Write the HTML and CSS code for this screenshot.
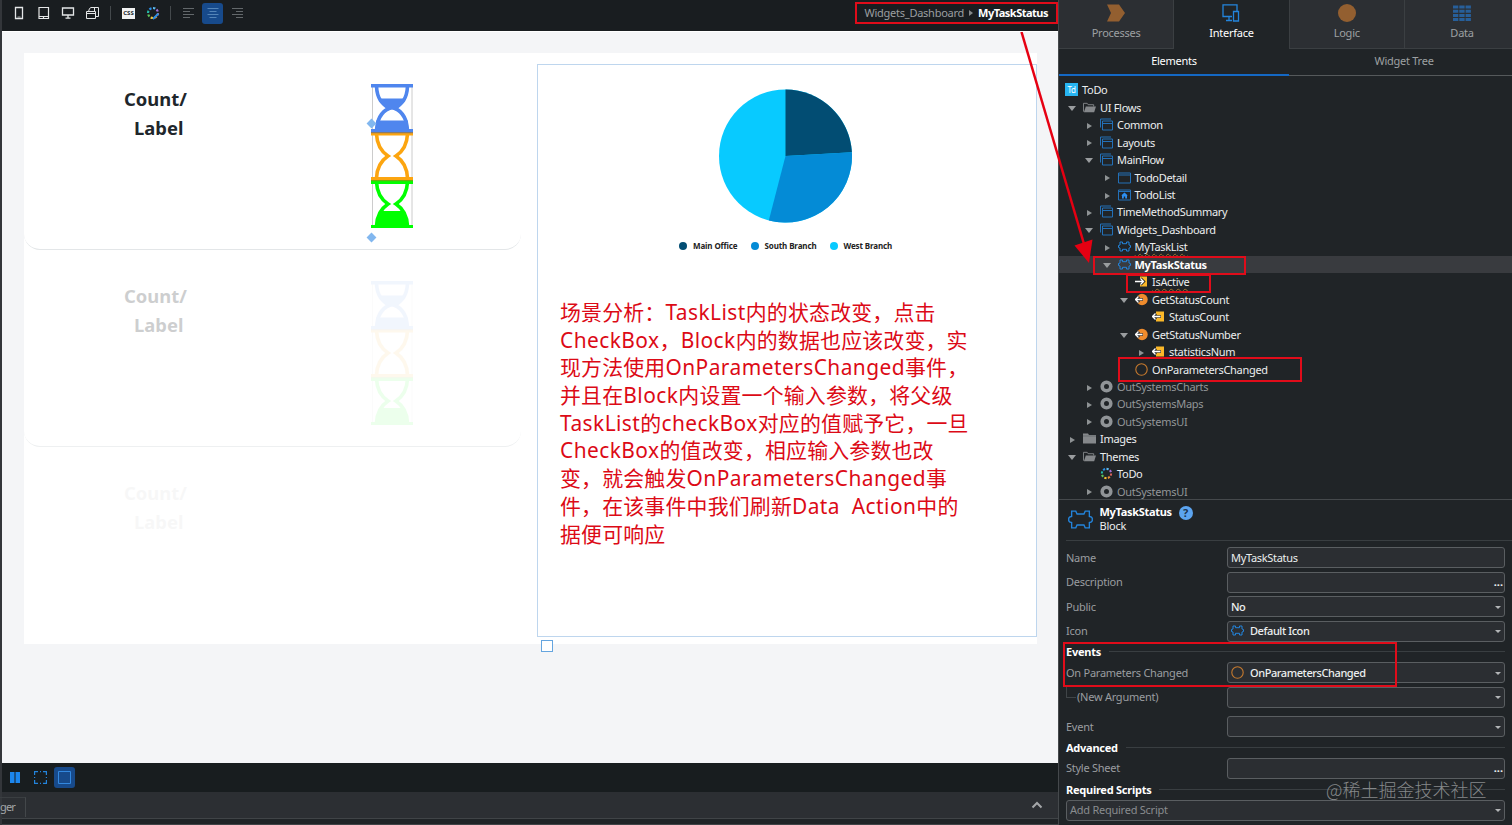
FILE: index.html
```
<!DOCTYPE html>
<html lang="en">
<head>
  <meta charset="UTF-8" />
  <meta name="viewport" content="width=device-width, initial-scale=1.0"/>
  <title>MyTaskStatus</title>
  <link rel="stylesheet" href="styles.css">
</head>
<body>
  <!-- Shared icons -->
  <svg class="defs" width="0" height="0">
    <symbol id="flow" viewBox="0 0 13 12"><path d="M2.5 2.5h10v9h-10zM2.5 5h10M.5 9V.5H11" fill="none" stroke="#2370b8"/></symbol>
    <symbol id="screen" viewBox="0 0 13 12"><path d="M.5 1.5h12v10H.5zM.5 3.5h12" fill="none" stroke="#2370b8"/></symbol>
    <symbol id="home" viewBox="0 0 13 12"><path d="M.5 1.5h12v10H.5zM.5 3h12" fill="none" stroke="#2370b8"/><path d="M6.5 4l3.3 3H9v3H7.2V8H5.8v2H4V7h-.8z" fill="#2d8ff0"/></symbol>
    <symbol id="block" viewBox="0 0 24 18"><path d="M3.500 1H7.500L8.700 3.700H15.300L16.500 1H20.500V6L22.500 6.600 23.300 7.800V10.200L22.500 11.400 20.500 12V17H16.500L15.300 14.300H8.700L7.500 17H3.500V12L1.500 11.400.7 10.200V7.800L1.500 6.600 3.500 6z" fill="none" stroke="#2384dc" stroke-width="1.300"/></symbol>
    <symbol id="block-small" viewBox="0 0 13 13"><path d="M2 2H4.500V3.700H8.500V2H11V5L12.500 5.500V7.500L11 8V11H8.500V9.300H4.500V11H2V8L.5 7.500V5.500L2 5z" fill="none" stroke="#2384dc" stroke-width="1"/></symbol>
    <symbol id="input" viewBox="0 0 13 12"><path d="M5 1h7v10H5z" fill="#fbb829"/><path d="M0 6h8M5.500 3l3 3-3 3" fill="none" stroke="#202427" stroke-width="3"/><path d="M0 6h8M5.500 3l3 3-3 3" fill="none" stroke="#fff" stroke-width="1.300"/></symbol>
    <symbol id="output" viewBox="0 0 13 12"><path d="M4 1h8v10H4z" fill="#fbb829"/><path d="M1 6h8M4 3L1 6l3 3" fill="none" stroke="#202427" stroke-width="2.600"/><path d="M.500 6h8M3.500 3L.5 6l3 3" fill="none" stroke="#fff" stroke-width="1.300"/></symbol>
    <symbol id="action" viewBox="0 0 13 12"><circle cx="7" cy="6" r="5.700" fill="#ee8b2d"/><path d="M0 6h8M4 3L1 6l3 3" fill="none" stroke="#202427" stroke-width="2.600"/><path d="M.500 6h7M3.500 3L.5 6l3 3" fill="none" stroke="#fff" stroke-width="1.300"/></symbol>
    <symbol id="event" viewBox="0 0 13 13"><circle cx="6.500" cy="6.500" r="5.700" fill="none" stroke="#c67a2e" stroke-width="1.100"/></symbol>
    <symbol id="module" viewBox="0 0 13 13"><circle cx="6.500" cy="6.500" r="4.300" fill="none" stroke="#909497" stroke-width="3.600"/></symbol>
    <symbol id="folder" viewBox="0 0 13 12"><path d="M0 1h5l1 1.500h7V11H0z" fill="#85888b"/><path d="M0 3.500h13" stroke="#5d6164" stroke-width=".7"/></symbol>
    <symbol id="folder-open" viewBox="0 0 14 12"><path d="M.5 10.500V1.500h4l1 1.500h6v2" fill="none" stroke="#85888b"/><path d="M3 5h11l-2 6H1z" fill="#85888b"/></symbol>
    <symbol id="wheel" viewBox="0 0 14 14"><g fill="none" stroke-width="2.200" stroke-dasharray="2.400 40">
      <circle cx="7" cy="7" r="5" stroke="#d9635c"/>
      <circle cx="7" cy="7" r="5" stroke="#e98c35" transform="rotate(45 7 7)"/>
      <circle cx="7" cy="7" r="5" stroke="#f1c232" transform="rotate(90 7 7)"/>
      <circle cx="7" cy="7" r="5" stroke="#5dc45a" transform="rotate(135 7 7)"/>
      <circle cx="7" cy="7" r="5" stroke="#25b9aa" transform="rotate(180 7 7)"/>
      <circle cx="7" cy="7" r="5" stroke="#2b8fe6" transform="rotate(225 7 7)"/>
      <circle cx="7" cy="7" r="5" stroke="#5cb8f0" transform="rotate(270 7 7)"/>
      <circle cx="7" cy="7" r="5" stroke="#a572d8" transform="rotate(315 7 7)"/></g></symbol>
    <symbol id="brush" viewBox="0 0 14 14"><use href="#wheel" width="14" height="14"/><path d="M7 13L12.500 7.500" stroke="#2b8fe6" stroke-width="2"/></symbol>
    <symbol id="glasses" viewBox="0 0 42 144">
      <path d="M1.500 2v140M41 2v140" stroke="#ccc" stroke-width="1"/>
      <g fill="none" stroke="#4f86ee" stroke-width="3.600">
        <path d="M5.500 2C6 16 12 20 18 24.500 10 28 6 36 5.500 47M36.500 2C36 16 30 20 24 24.500 32 28 36 36 36.500 47"/>
      </g>
      <path d="M0 0h42v3.500H0zM0 45h42v3.500H0zM7 14.500h28c-2 5-7 8-11 11h-6c-4-3-9-6-11-11zM5 36.500h32V46H5z" fill="#4f86ee"/>
      <g fill="none" stroke="#fca510" stroke-width="3.600">
        <path d="M5.500 50C6 62 11 68 17 72 11 76 6 83 5.500 94M36.500 50C36 62 31 68 25 72 31 76 36 83 36.500 94"/>
      </g>
      <path d="M0 48.500h42v3H0zM0 93h42v3H0z" fill="#fca510"/>
      <path d="M0 48h42v1.200H0z" fill="#8b7b68"/>
      <g fill="none" stroke="#0f0" stroke-width="3.600">
        <path d="M5.500 98C6 110 11 116 17 120 11 124 6 131 5.500 142M36.500 98C36 110 31 116 25 120 31 124 36 131 36.500 142"/>
      </g>
      <path d="M0 96.500h42v3.500H0zM0 141h42v3H0zM9 127h24c3 5 4 10 4 15H5c0-5 1-10 4-15z" fill="#0f0"/>
      <path d="M0 96h42v1.200H0z" fill="#6aaf10"/>
    </symbol>
  </svg>

  <div class="app">
    <main class="editor">
      <div class="toolbar">
        <svg class="tool t1" width="14" height="14" viewBox="0 0 14 14"><path d="M3.500 1.500h7v11h-7z" fill="none" stroke="#e4e6e7" stroke-width="1.300"/><path d="M5.500 11h3" stroke="#e4e6e7" stroke-width=".7"/></svg>
        <svg class="tool t2" width="14" height="14" viewBox="0 0 14 14"><path d="M2 1.500h9.500v11H2zM2 10.500h9.500M6.500 10.500v2" fill="none" stroke="#e4e6e7" stroke-width="1.200"/></svg>
        <svg class="tool t3" width="14" height="14" viewBox="0 0 14 14"><path d="M1.500 2h11v7h-11zM7 9v3M4.500 12.200h5" fill="none" stroke="#e4e6e7" stroke-width="1.300"/></svg>
        <svg class="tool t4" width="14" height="14" viewBox="0 0 14 14"><path d="M.5 5.500h9v7h-9zM.5 7.500h9M2.500 5.500l1-3 1.500-1H12.500v9h-3M8.500 1.500v4" fill="none" stroke="#e4e6e7"/></svg>
        <i class="sep s1"></i>
        <span class="css">CSS</span>
        <svg class="tool t5" width="14" height="14"><use href="#brush"/></svg>
        <i class="sep s2"></i>
        <svg class="tool t6" width="12" height="12" viewBox="0 0 12 12"><path d="M0 1.500h11M0 4.500h7M0 7.500h11M0 10.500h7" stroke="#63686b"/></svg>
        <span class="selected"><svg width="12" height="12" viewBox="0 0 12 12"><path d="M.5 1.500h11M2.500 4.500h7M.5 7.500h11M2.500 10.500h7" stroke="#5485b8"/></svg></span>
        <svg class="tool t7" width="12" height="12" viewBox="0 0 12 12"><path d="M0 1.500h11M4 4.500h7M0 7.500h11M4 10.500h7" stroke="#63686b"/></svg>
        <div class="crumbs"><span>Widgets_Dashboard</span><i class="tri"></i><b>MyTaskStatus</b></div>
      </div>

      <div class="canvas">
        <div class="page">
          <div class="list">
            <div class="card">
              <div class="count">Count/<br><span>Label</span></div>
              <div class="icons">
                <svg width="42" height="144"><use href="#glasses"/></svg>
                <i class="handle h1"></i><i class="handle h2"></i>
              </div>
            </div>
            <div class="card faded">
              <div class="count">Count/<br><span>Label</span></div>
              <div class="icons"><svg width="42" height="144"><use href="#glasses"/></svg></div>
            </div>
            <div class="card ghost">
              <div class="count">Count/<br><span>Label</span></div>
            </div>
          </div>
          <div class="chart-box">
            <svg class="pie" width="134" height="134" viewBox="0 0 134 134">
              <circle cx="66.500" cy="67" r="66.500" fill="#08caff"/>
              <path d="M66.500 67V.5A66.500 66.500 0 0 1 132.900 63.200z" fill="#024d73"/>
              <path d="M66.500 67L132.900 63.200A66.500 66.500 0 0 1 49.800 131.400z" fill="#048bd6"/>
            </svg>
            <div class="legend">
              <span><i class="dot main"></i>Main Office</span>
              <span><i class="dot south"></i>South Branch</span>
              <span><i class="dot west"></i>West Branch</span>
            </div>
            <div class="note">
              <p>场景分析：<span>TaskList</span>内的状态改变，点击</p>
              <p><span>CheckBox</span>，<span>Block</span>内的数据也应该改变，实</p>
              <p>现方法使用<span>OnParametersChanged</span>事件，</p>
              <p>并且在<span>Block</span>内设置一个输入参数，将父级</p>
              <p><span>TaskList</span>的<span>checkBox</span>对应的值赋予它，一旦</p>
              <p><span>CheckBox</span>的值改变，相应输入参数也改</p>
              <p>变，就会触发<span>OnParametersChanged</span>事</p>
              <p>件，在该事件中我们刷新<span>Data&nbsp; Action</span>中的</p>
              <p>据便可响应</p>
            </div>
            <i class="drop"></i>
          </div>
        </div>
      </div>

      <div class="statusbar">
        <svg width="10" height="11" viewBox="0 0 10 11"><path d="M0 0h4.500v11H0zM5.500 0H10v11H5.500z" fill="#1b86ee"/></svg>
        <svg class="frame" width="13" height="13" viewBox="0 0 13 13"><path d="M.6 4V.6H4M9 .6h3.400V4M12.400 9v3.400H9M4 12.400H.6V9M6 .6h1M6 12.400h1M.6 6v1M12.400 6v1" fill="none" stroke="#2384dc" stroke-width="1.200"/></svg>
        <span class="selected"><svg width="13" height="13" viewBox="0 0 13 13"><path d="M.5.5h12v12H.5z" fill="none" stroke="#3388df"/></svg></span>
      </div>
      <div class="dock">
        <span class="dock-tab">ger</span>
        <svg width="12" height="8" viewBox="0 0 12 8"><path d="M1.500 6.500L6 2l4.500 4.500" fill="none" stroke="#a4a7a9" stroke-width="2"/></svg>
      </div>
      <div class="dock-foot"></div>
    </main>

    <aside class="side">
      <nav class="tabs">
        <div class="tab"><svg width="20" height="18" viewBox="0 0 20 18"><path d="M1 .5h12l6 8.500-6 8.500H1L5 9z" fill="#935f30"/></svg>Processes</div>
        <div class="tab active"><svg width="20" height="18" viewBox="0 0 20 18"><path d="M11 12.500H2V.8h14V7M8 12.500V16M5 16.500h6M12.500 7.500h5v9.500h-5z" fill="none" stroke="#2384dc" stroke-width="1.300"/></svg>Interface</div>
        <div class="tab"><svg width="20" height="18" viewBox="0 0 20 18"><circle cx="10" cy="9" r="9" fill="#935f30"/></svg>Logic</div>
        <div class="tab"><svg width="20" height="18" viewBox="0 0 20 18"><path d="M1 3h18M1 7.200h18M1 11.400h18M1 15.600h18" stroke="#275f9a" stroke-width="3" stroke-dasharray="5.300 1"/></svg>Data</div>
      </nav>
      <nav class="subtabs"><span class="active">Elements</span><span>Widget Tree</span></nav>

      <div class="tree">
        <div class="node root"><span class="logo">Td</span>ToDo</div>
        <div class="node l1"><i class="down"></i><svg><use href="#folder-open"/></svg>UI Flows</div>
        <div class="node l2"><i class="right"></i><svg><use href="#flow"/></svg>Common</div>
        <div class="node l2"><i class="right"></i><svg><use href="#flow"/></svg>Layouts</div>
        <div class="node l2"><i class="down"></i><svg><use href="#flow"/></svg>MainFlow</div>
        <div class="node l3"><i class="right"></i><svg><use href="#screen"/></svg>TodoDetail</div>
        <div class="node l3"><i class="right"></i><svg><use href="#home"/></svg>TodoList</div>
        <div class="node l2"><i class="right"></i><svg><use href="#flow"/></svg>TimeMethodSummary</div>
        <div class="node l2"><i class="down"></i><svg><use href="#flow"/></svg>Widgets_Dashboard</div>
        <div class="node l3"><i class="right"></i><svg><use href="#block-small"/></svg><span class="warn">MyTaskList</span></div>
        <div class="node l3 current"><i class="down"></i><svg><use href="#block-small"/></svg>MyTaskStatus</div>
        <div class="node l4"><i></i><svg><use href="#input"/></svg><span class="warn">IsActive</span></div>
        <div class="node l4"><i class="down"></i><svg><use href="#action"/></svg>GetStatusCount</div>
        <div class="node l5"><i></i><svg><use href="#output"/></svg>StatusCount</div>
        <div class="node l4"><i class="down"></i><svg><use href="#action"/></svg>GetStatusNumber</div>
        <div class="node l5"><i class="right"></i><svg><use href="#output"/></svg>statisticsNum</div>
        <div class="node l4"><i></i><svg><use href="#event"/></svg>OnParametersChanged</div>
        <div class="node l2 dim"><i class="right"></i><svg><use href="#module"/></svg>OutSystemsCharts</div>
        <div class="node l2 dim"><i class="right"></i><svg><use href="#module"/></svg>OutSystemsMaps</div>
        <div class="node l2 dim"><i class="right"></i><svg><use href="#module"/></svg>OutSystemsUI</div>
        <div class="node l1"><i class="right"></i><svg><use href="#folder"/></svg>Images</div>
        <div class="node l1"><i class="down"></i><svg><use href="#folder-open"/></svg>Themes</div>
        <div class="node l2"><i></i><svg><use href="#wheel"/></svg>ToDo</div>
        <div class="node l2 dim"><i class="right"></i><svg><use href="#module"/></svg>OutSystemsUI</div>
      </div>

      <div class="props">
        <div class="props-head">
          <svg width="25" height="19"><use href="#block"/></svg>
          <div><b>MyTaskStatus</b><br>Block</div>
          <span class="help">?</span>
        </div>
        <div class="row"><label>Name</label><div class="field">MyTaskStatus</div></div>
        <div class="row"><label>Description</label><div class="field"><em>...</em></div></div>
        <div class="row"><label>Public</label><div class="field strong">No<i class="caret"></i></div></div>
        <div class="row"><label>Icon</label><div class="field strong"><svg><use href="#block-small"/></svg>Default Icon<i class="caret"></i></div></div>
        <div class="section">Events</div>
        <div class="row"><label>On Parameters Changed</label><div class="field strong"><svg><use href="#event"/></svg>OnParametersChanged<i class="caret"></i></div></div>
        <div class="row"><label class="child">(New Argument)</label><div class="field"><i class="caret"></i></div></div>
        <div class="row spaced"><label>Event</label><div class="field"><i class="caret"></i></div></div>
        <div class="section">Advanced</div>
        <div class="row"><label>Style Sheet</label><div class="field"><em>...</em></div></div>
        <div class="section">Required Scripts</div>
        <div class="row"><div class="field wide">Add Required Script<i class="caret"></i></div></div>
      </div>
    </aside>
  </div>

  <!-- Red marks drawn over the UI -->
  <div class="mark m1"></div>
  <div class="mark m2"></div>
  <div class="mark m3"></div>
  <div class="mark m4"></div>
  <div class="mark m5"></div>
  <svg class="arrow" width="80" height="235" viewBox="0 0 80 235"><path d="M6.500 0L69 212" stroke="#e60012" stroke-width="2.500"/><path d="M74 231L59.500 213.500 77.500 207.500z" fill="#e60012"/></svg>
  <div class="watermark">@稀土掘金技术社区</div>
</body>
</html>
```
FILE: styles.css
```
* { box-sizing: border-box; }
body {
  margin: 0;
  width: 1512px;
  height: 825px;
  overflow: hidden;
  position: relative;
  background: #202427;
  color: #eceeef;
  font-family: "Noto Sans", "Noto Sans CJK SC", sans-serif;
  font-size: 11px;
  letter-spacing: -.25px;
}
i { display: block; flex: none; }
svg { flex: none; }
.defs { position: absolute; }
.app { display: flex; height: 825px; }

/* Editor */
.editor {
  width: 1059px;
  display: flex;
  flex-direction: column;
  border-left: 2px solid #33363a;
  border-right: 1px solid #45494c;
}
.toolbar {
  height: 31px;
  padding: 0 10px 5px 10px;
  display: flex;
  align-items: center;
  background: #191d20;
}
.t2 { margin-left: 11px; }
.t3 { margin-left: 10px; }
.t4 { margin-left: 11px; }
.sep { width: 1px; height: 14px; background: #44494c; }
.s1 { margin-left: 10px; }
.css {
  margin-left: 11px;
  width: 13px;
  height: 11px;
  background: #f1f2f2;
  color: #22272a;
  font-size: 6px;
  font-weight: bold;
  line-height: 11px;
  letter-spacing: 0;
  text-align: center;
}
.t5 { margin-left: 11px; }
.s2 { margin-left: 10px; }
.t6 { margin-left: 12px; }
.t7 { margin-left: 9px; }
.selected {
  width: 21px;
  height: 21px;
  border-radius: 3px;
  background: #174a8b;
  display: flex;
  align-items: center;
  justify-content: center;
}
.toolbar .selected { margin-left: 7px; }
.crumbs {
  margin-left: auto;
  height: 22px;
  margin-top: -1px;
  display: flex;
  align-items: center;
  color: #9b9fa1;
}
.crumbs b { color: #fff; letter-spacing: -.5px; }
.tri {
  margin: 1px 5px 0 5px;
  border-left: 4px solid #85898b;
  border-top: 3px solid transparent;
  border-bottom: 3px solid transparent;
}
.canvas {
  height: 732px;
  padding: 21px 20px 0 22px;
  background: #f4f5f7;
  border-top: 1px solid #fff;
}
.page {
  height: 591px;
  width: 1013px;
  display: flex;
  background: #fff;
}
.list { width: 513px; }
.card {
  width: 497px;
  height: 197px;
  padding: 32px 0 0 100px;
  display: flex;
  border-bottom: 1px solid #e3e6e8;
  border-radius: 0 0 16px 16px;
}
.card.faded { border-color: #eef0f1; }
.card.ghost { border: none; }
.count {
  width: 246.5px;
  color: #20262b;
  font-size: 18.4px;
  font-weight: bold;
  line-height: 28.5px;
  letter-spacing: 0;
}
.count span { margin-left: 10px; }
.faded .count { opacity: .22; }
.faded .icons { opacity: .07; }
.ghost .count { opacity: .03; }
.icons { position: relative; margin-top: -1px; }
.handle {
  position: absolute;
  left: -3px;
  width: 7px;
  height: 7px;
  background: #82b7ef;
  transform: rotate(45deg);
}
.h1 { top: 36px; }
.h2 { top: 150px; }
.chart-box {
  position: relative;
  width: 500px;
  height: 573px;
  margin-top: 11px;
  padding: 24px 0 0 22px;
  border: 1px solid #bed6ee;
}
.pie { display: block; margin-left: 159px; }
.legend {
  display: flex;
  gap: 13px;
  margin: 16px 0 0 119px;
  color: #222;
  font-size: 8px;
  font-weight: bold;
  line-height: 14px;
  letter-spacing: -.12px;
}
.legend span { display: flex; align-items: center; }
.dot { width: 8px; height: 8px; margin-right: 6px; border-radius: 50%; }
.main { background: #024d73; }
.south { background: #048bd6; }
.west { background: #08caff; }
.note {
  margin-top: 46px;
  color: #dc0a16;
  font-size: 20.9px;
  line-height: 27.7px;
  letter-spacing: .2px;
  white-space: nowrap;
}
.note p { margin: 0; height: 27.7px; }
.note span { letter-spacing: .45px; }
.drop {
  position: absolute;
  left: 3px;
  top: 575px;
  width: 12px;
  height: 12px;
  border: 1.5px solid #65a5df;
  background: #fff;
}
.statusbar {
  height: 29px;
  padding-left: 8px;
  display: flex;
  align-items: center;
  background: #181d1f;
}
.frame { margin: 0 7px 0 14px; }
.dock {
  height: 26px;
  padding-right: 15px;
  display: flex;
  align-items: center;
  justify-content: space-between;
  background: #2c2f33;
}
.dock-tab {
  width: 26px;
  height: 20px;
  margin-top: 4px;
  margin-left: -2px;
  padding-top: 1px;
  border-top: 1px solid #3a3e41;
  border-right: 1px solid #43474a;
  color: #a3a6a8;
  letter-spacing: -.8px;
}
.dock-foot { height: 7px; border-top: 1px solid #404447; border-bottom: 1px solid #404447; background: #202427; }

/* Side panel */
.side { width: 453px; display: flex; flex-direction: column; }
.tabs { display: flex; height: 49px; overflow: hidden; }
.tab {
  width: 115.3px;
  flex: none;
  padding-top: 4px;
  display: flex;
  flex-direction: column;
  align-items: center;
  gap: 3px;
  background: #2c2f33;
  border-right: 1px solid #3b3f42;
  border-bottom: 1px solid #3b3f42;
  color: #9da0a2;
  line-height: 15px;
}
.tab.active { background: #202427; border-bottom: none; color: #fff; }
.subtabs { display: flex; height: 27px; line-height: 24px; text-align: center; }
.subtabs span { width: 230px; flex: none; border-bottom: 1px solid #55595b; color: #9da0a2; }
.subtabs .active { border-bottom: 2px solid #1468c4; color: #fff; }
.tree { height: 423px; padding-top: 5.1px; overflow: hidden; letter-spacing: -.31px; }
.node {
  height: 17.46px;
  display: flex;
  align-items: center;
  white-space: nowrap;
}
.node svg { width: 13px; height: 13px; margin-right: 4px; }
.node i { width: 17px; margin-top: 2px; }
.root { padding-left: 6px; }
.l1 { padding-left: 7px; }
.l2 { padding-left: 24px; }
.l3 { padding-left: 41.5px; }
.l4 { padding-left: 59px; }
.l5 { padding-left: 76px; }
.dim { color: #929698; letter-spacing: -.28px; }
.current { background: #393b3f; color: #fff; font-weight: bold; }
.right::before, .down::before { content: ""; display: block; width: 0; }
.right::before {
  margin-left: 4px;
  border-left: 5px solid #8e9294;
  border-top: 3.5px solid transparent;
  border-bottom: 3.5px solid transparent;
}
.down::before {
  margin-left: 2px;
  border-top: 5px solid #9a9d9f;
  border-left: 4px solid transparent;
  border-right: 4px solid transparent;
}
.warn { text-decoration: underline wavy #9c7430 1px; text-underline-offset: 2px; }
.logo {
  width: 13px;
  height: 13px;
  margin-right: 4px;
  background: #27b5f2;
  color: #fff;
  font-size: 8px;
  line-height: 13px;
  text-align: center;
}

/* Properties */
.props { border-top: 1px solid #45494c; padding-left: 7px; }
.props-head {
  height: 41px;
  margin-bottom: 4.8px;
  padding-left: 2px;
  display: flex;
  align-items: center;
  border-bottom: 1px solid #393e41;
  line-height: 14px;
}
.props-head svg { margin-top: -1px; }
.props-head div { width: 79px; margin: -2px 0 0 6.500px; }
.props-head b { color: #fff; letter-spacing: -.3px; }
.help {
  width: 14px;
  height: 14px;
  margin-top: -14px;
  border-radius: 50%;
  background: #5ca4ef;
  color: #1d3450;
  text-align: center;
  font-weight: bold;
}
.row { height: 24.4px; padding-right: 7px; display: flex; align-items: center; }
.row label { width: 161px; flex: none; margin-top: -1px; color: #9a9da0; }
.row .child { padding-left: 11px; position: relative; }
.child::before {
  content: "";
  position: absolute;
  left: 0;
  top: -2px;
  width: 9px;
  height: 10px;
  border-left: 1px solid #404548;
  border-bottom: 1px solid #404548;
}
.spaced { margin-top: 5.4px; }
.field {
  width: 278px;
  height: 21px;
  padding: 0 3px 1px 3px;
  display: flex;
  align-items: center;
  border: 1px solid #5a5e61;
  border-radius: 3px;
  background: #2b2e32;
  letter-spacing: -.3px;
}
.field svg { width: 13px; height: 13px; margin-right: 6px; }
.strong { font-weight: 500; letter-spacing: -.42px; }
.wide { width: 439px; color: #898c8f; letter-spacing: -.25px; }
.field em { margin-left: auto; margin-right: -2px; font-style: normal; font-weight: bold; letter-spacing: 0; }
.caret {
  margin-left: auto;
  margin-top: 2px;
  border-top: 3px solid #b3b5b7;
  border-left: 3px solid transparent;
  border-right: 3px solid transparent;
}
.section {
  height: 17.2px;
  padding-right: 7px;
  display: flex;
  align-items: center;
  gap: 8px;
  color: #fff;
  font-weight: bold;
}
.section::after { content: ""; flex: 1; height: 1px; background: #393e41; }

/* Overlays */
.mark { position: absolute; border: 2px solid #e00c1a; }
.m1 { left: 855px; top: 2px; width: 203px; height: 22px; }
.m2 { left: 1093px; top: 256px; width: 153px; height: 19px; }
.m3 { left: 1126px; top: 274px; width: 85px; height: 19px; }
.m4 { left: 1118px; top: 357px; width: 184px; height: 25px; }
.m5 { left: 1063px; top: 642px; width: 334px; height: 45px; }
.arrow { position: absolute; left: 1015px; top: 32px; }
.watermark {
  position: absolute;
  left: 1326px;
  top: 777px;
  color: #85888a;
  font-family: "Noto Sans CJK SC", sans-serif;
  font-size: 18px;
  font-weight: 300;
  line-height: 24px;
  letter-spacing: 0;
}
```
